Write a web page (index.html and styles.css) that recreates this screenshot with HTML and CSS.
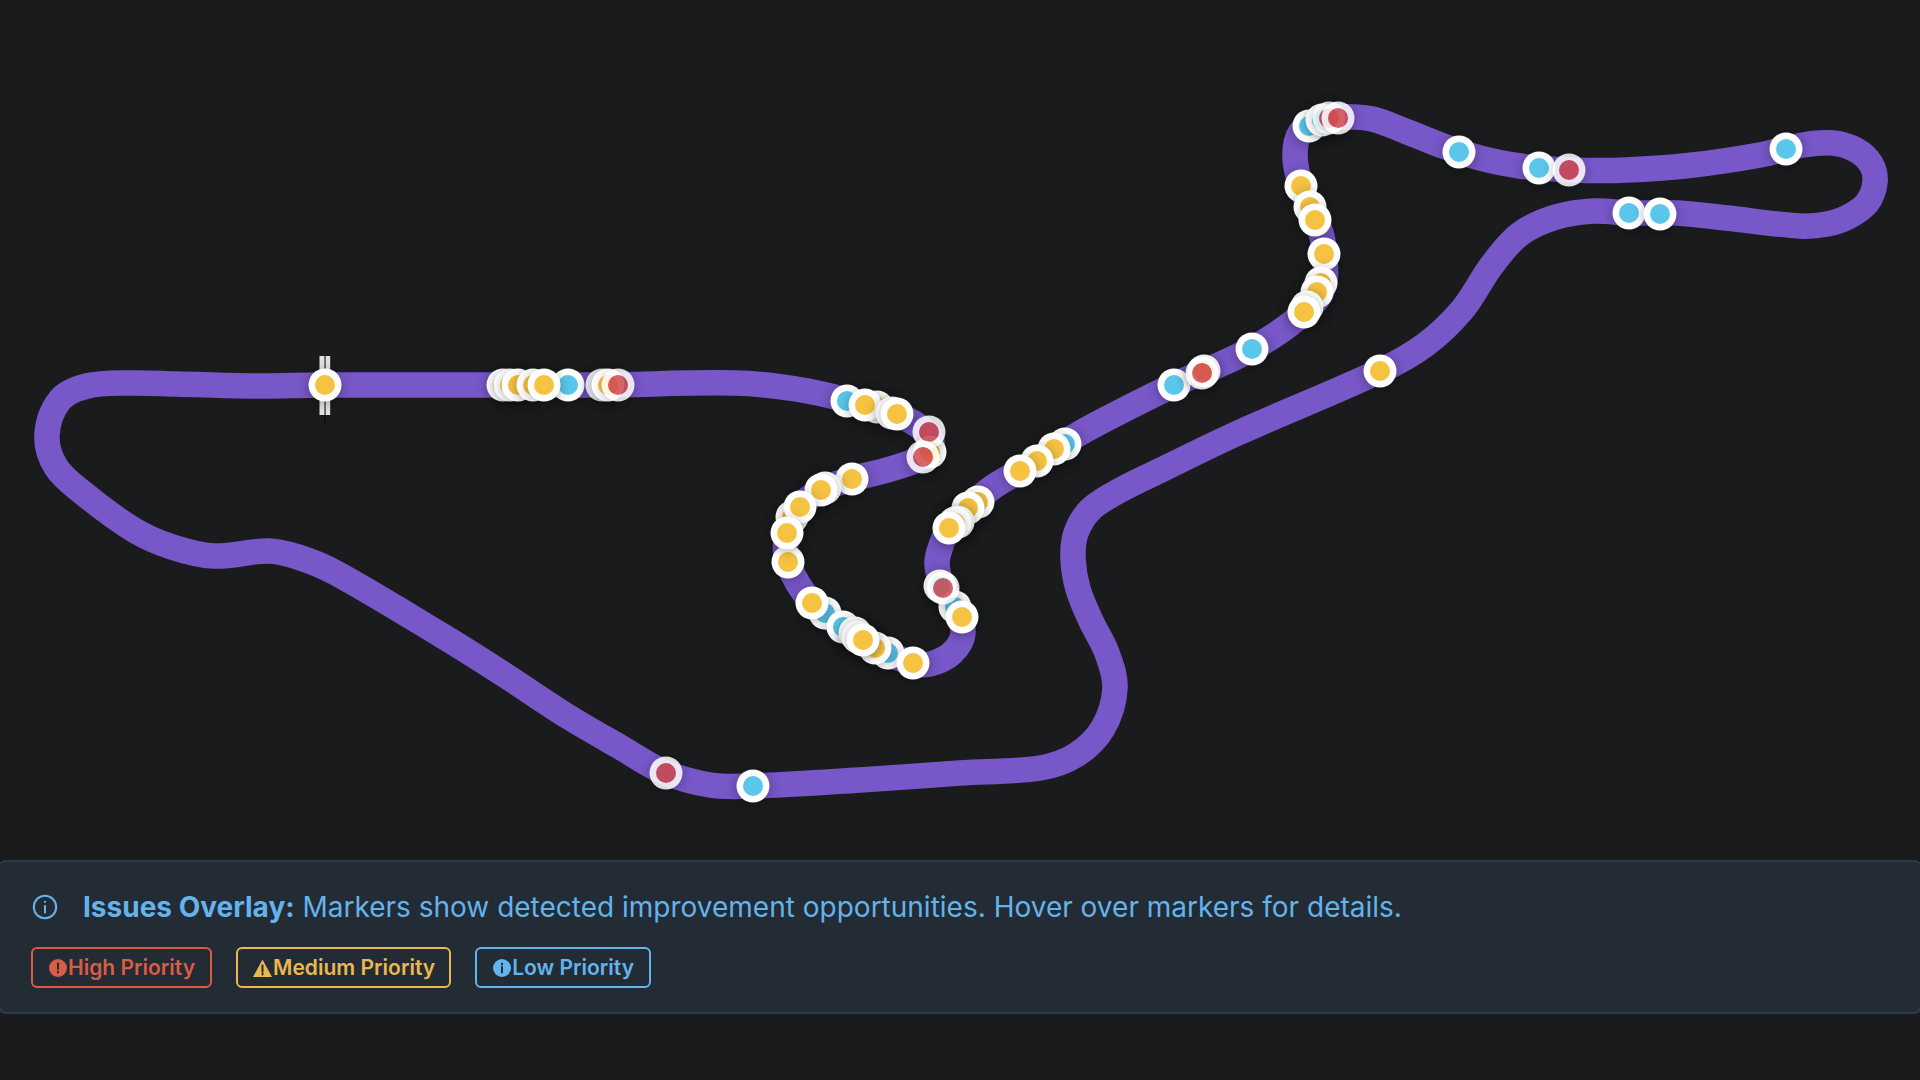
FILE: index.html
```html
<!DOCTYPE html>
<html lang="en">
<head>
<meta charset="utf-8">
<title>Issues Overlay</title>
<link rel="stylesheet" href="styles.css">
</head>
<body>
<main class="page">
  <section class="map">
    <svg id="track-map" class="track-svg" viewBox="0 0 1920 860" xmlns="http://www.w3.org/2000/svg" aria-label="Track map">
      <path id="track" class="track" d=""></path>
      <g class="start-line">
        <rect class="start-shadow" x="324" y="356" width="1.4" height="69"></rect>
        <rect class="start-bar" x="319.5" y="356" width="5" height="59"></rect>
        <rect class="start-bar" x="325.6" y="356" width="4.6" height="59"></rect>
      </g>
      <g id="markers"></g>
    </svg>
  </section>
  <section class="panel">
    <div class="note">
      <svg class="note-icon" viewBox="0 0 24 24" fill="none" stroke="currentColor" stroke-width="1.8" stroke-linecap="round"><circle cx="12" cy="12" r="9.6"></circle><path d="M12 11.2v5.6M12 7.6v.01"></path></svg>
      <p class="note-text"><strong>Issues Overlay:</strong> Markers show detected improvement opportunities. Hover over markers for details.</p>
    </div>
    <div class="legend">
      <span class="chip chip-high"><svg class="chip-icon" viewBox="0 0 18 18"><circle cx="9" cy="9" r="9" fill="currentColor"></circle><path class="chip-mark" d="M9 4.5v5.5M9 12.6v.9"></path></svg>High Priority</span>
      <span class="chip chip-medium"><svg class="chip-icon" viewBox="0 0 19 18"><path d="M9.5 .5 19 18H0Z" fill="currentColor"></path><path class="chip-mark" d="M9.5 6.5v6M9.5 14.6v.9"></path></svg>Medium Priority</span>
      <span class="chip chip-low"><svg class="chip-icon" viewBox="0 0 18 18"><circle cx="9" cy="9" r="9" fill="currentColor"></circle><path class="chip-mark" d="M9 8v5.5M9 4.6v.9"></path></svg>Low Priority</span>
    </div>
  </section>
</main>
<script src="track.js"></script>
</body>
</html>
```
FILE: styles.css
```css
* { box-sizing: border-box; }
html, body { margin: 0; height: 100%; }
body { background: #1a1b1d; font-family: Inter, "Liberation Sans", sans-serif; overflow: hidden; }
.page { display: flex; flex-direction: column; height: 1080px; }
.map { height: 860px; flex: none; }
.track-svg { display: block; width: 1920px; height: 860px; }
.track { fill: none; stroke: #7857c8; stroke-width: 25.5; stroke-linejoin: round; stroke-linecap: round; }
.start-bar { fill: #e2e2e2; }
.start-shadow { fill: #0c0c0e; }
.marker { filter: drop-shadow(0 2px 6px rgba(0,0,0,.32)); }
.marker-h { opacity: .85; }
.marker-ring { fill: #fff; }
.m-h { fill: #d04a50; }
.m-m { fill: #f5c242; }
.m-l { fill: #5ac6ec; }
.panel { flex: none; height: 154px; margin: 0 -2px; background: #232b34; border: 2px solid #2c3b47; border-radius: 8px; padding: 26px 31px 0; color: #63b3ed; display: flex; flex-direction: column; gap: 21px; }
.note { display: flex; align-items: center; gap: 24px; height: 38px; }
.note-icon { width: 28px; height: 28px; flex: none; }
.note-text { margin: 0; font-size: 28px; line-height: 38px; white-space: nowrap; font-weight: 400; }
.note-text strong { font-weight: 700; }
.legend { display: flex; gap: 24px; }
.chip { display: flex; align-items: center; gap: 1px; height: 41px; padding: 0 15px 0 16px; border: 2px solid currentColor; border-radius: 6px; font-size: 21px; font-weight: 600; white-space: nowrap; }
.chip-icon { height: 18px; width: auto; flex: none; }
.chip-mark { stroke: #232b34; stroke-width: 2; stroke-linecap: round; fill: none; }
.chip-high { color: #d95c45; }
.chip-medium { color: #ebb850; padding: 0 14px 0 15px; }
.chip-low { color: #63b3ed; }
```
FILE: track.js
```js
var pts = [[325,385],[450,385],[600,385],[735,383],[796,389],[847,400],[898,415],[926,432],[932,446],[921,458],[887,470],[852,479],[821,490],[800,507],[787,533],[788,563],[812,603],[843,627],[875,648],[913,663],[930,664],[952,653],[963,633],[955,607],[943,588],[937,563],[942,543],[949,528],[968,508],[993,487],[1020,471],[1054,449],[1091,427],[1174,385],[1252,349],[1304,313],[1323,289],[1325,257],[1321,233],[1315,220],[1301,186],[1295,157],[1300,133],[1317,122],[1337,117],[1372,119],[1405,131],[1443,146],[1480,158],[1520,166],[1570,170],[1627,170],[1693,165],[1760,155],[1803,145],[1833,143],[1856,150],[1871,164],[1875,182],[1867,203],[1848,217],[1827,224],[1800,226],[1727,218],[1677,213],[1629,213],[1594,211],[1556,217],[1520,234],[1492,265],[1462,310],[1425,345],[1380,371],[1238,433],[1159,471],[1115,493],[1090,510],[1076,533],[1073,558],[1078,589],[1091,621],[1107,653],[1115,688],[1103,728],[1076,755],[1040,768],[960,773],[860,780],[753,786],[710,785],[664,772],[620,747],[567,716],[500,672],[441,635],[336,573],[298,557],[268,551],[214,556],[172,547],[134,530],[83,493],[56,467],[47,435],[60,400],[87,386],[129,383],[176,384],[251,386]];
var n = pts.length, d = "M" + pts[0][0] + " " + pts[0][1];
function P(i) { return pts[(i + n) % n]; }
function tangent(i) {
  var a = P(i - 1), c = P(i + 1), dx = c[0] - a[0], dy = c[1] - a[1], len = Math.hypot(dx, dy);
  return [dx / len, dy / len];
}
for (var i = 0; i < n; i++) {
  var b = P(i), c = P(i + 1), t0 = tangent(i), t1 = tangent(i + 1);
  var h = Math.hypot(c[0] - b[0], c[1] - b[1]) / 3;
  d += "C" + (b[0] + t0[0] * h).toFixed(1) + " " + (b[1] + t0[1] * h).toFixed(1) + " " +
       (c[0] - t1[0] * h).toFixed(1) + " " + (c[1] - t1[1] * h).toFixed(1) + " " + c[0] + " " + c[1];
}
document.getElementById("track").setAttribute("d", d + "Z");

var markers = [
  [325,385,"m"],
  [503,385,"m"],[510,385,"m"],[518,385,"m"],[533,385,"m"],[568,385,"l"],[544,385,"m"],
  [602,385,"h"],[608,385,"m"],[618,385,"h"],
  [847,401,"l"],[877,407,"m"],[865,405,"m"],[892,413,"m"],[897,414,"m"],
  [930,452,"m"],[929,432,"h"],[923,457,"h"],
  [852,479,"m"],[825,488,"m"],[821,490,"m"],[792,517,"m"],[800,507,"m"],[788,562,"m"],[787,533,"m"],
  [825,613,"l"],[812,603,"m"],[843,627,"l"],[888,653,"l"],[875,648,"m"],[855,633,"m"],[858,637,"m"],[863,640,"m"],[913,663,"m"],
  [940,586,"l"],[955,607,"l"],[943,588,"h"],[962,617,"m"],
  [978,502,"m"],[968,508,"m"],[958,522,"m"],[955,523,"m"],[949,528,"m"],
  [1065,444,"l"],[1054,449,"m"],[1037,461,"m"],[1020,471,"m"],
  [1174,385,"l"],[1204,371,"m"],[1202,373,"h"],[1252,349,"l"],
  [1301,186,"m"],[1310,207,"m"],[1315,220,"m"],[1324,254,"m"],[1321,283,"m"],[1317,292,"m"],[1307,307,"m"],[1304,312,"m"],
  [1309,126,"l"],[1322,120,"l"],[1329,118,"h"],[1338,118,"h"],
  [1459,152,"l"],[1539,168,"l"],[1569,170,"h"],[1786,149,"l"],[1629,213,"l"],[1660,214,"l"],
  [1380,371,"m"],[666,773,"h"],[753,786,"l"]
];
var NS = "http://www.w3.org/2000/svg", layer = document.getElementById("markers");
function circle(parent, x, y, r, cls) {
  var el = document.createElementNS(NS, "circle");
  el.setAttribute("cx", x); el.setAttribute("cy", y); el.setAttribute("r", r); el.setAttribute("class", cls);
  parent.appendChild(el);
}
markers.forEach(function (m) {
  var g = document.createElementNS(NS, "g");
  g.setAttribute("class", "marker marker-" + m[2]);
  circle(g, m[0], m[1], 16.5, "marker-ring");
  circle(g, m[0], m[1], 10, "m-" + m[2]);
  layer.appendChild(g);
});
```
